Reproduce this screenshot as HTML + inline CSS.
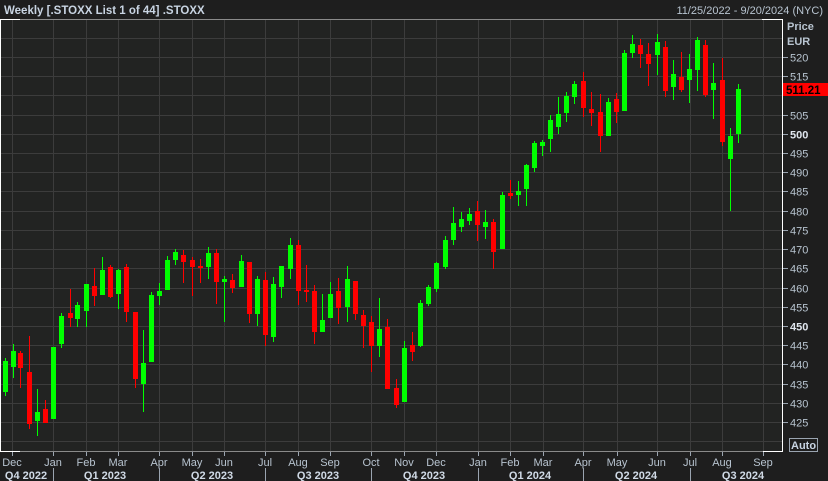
<!DOCTYPE html>
<html><head><meta charset="utf-8"><style>
html,body{margin:0;padding:0;background:#1e1e1e;}
body{width:828px;height:481px;overflow:hidden;position:relative;font-family:"Liberation Sans",sans-serif;}
svg{position:absolute;left:0;top:0;}
</style></head><body>
<svg id="s" width="828" height="481" xmlns="http://www.w3.org/2000/svg" font-family="Liberation Sans, sans-serif">
<rect x="0" y="0" width="828" height="481" fill="#1e1e1e"/>
<rect x="0" y="19" width="783" height="432" fill="#222322"/>
<g id="grid" stroke="#3c3c3c" stroke-width="1"></g>
<g id="c"></g>
<line x1="0" y1="19.5" x2="763" y2="19.5" stroke="#8a8a8a"/>
<line x1="0" y1="19.5" x2="20" y2="19.5" stroke="#ffffff"/>
<line x1="762" y1="19.5" x2="783" y2="19.5" stroke="#ffffff"/>
<line x1="782.5" y1="19" x2="782.5" y2="452" stroke="#ffffff"/>
<line x1="763" y1="451.5" x2="783" y2="451.5" stroke="#ffffff"/>
<line x1="0" y1="451.5" x2="763" y2="451.5" stroke="#8a8a8a"/>
<line x1="0.5" y1="19" x2="0.5" y2="451" stroke="#ffffff"/>
<line x1="0" y1="451.5" x2="20" y2="451.5" stroke="#ffffff"/>
<g id="ax" fill="#b8c4d0" font-size="11"></g>
<text x="4" y="14" fill="#c8d4e2" font-size="11.5" font-weight="bold">Weekly [.STOXX List 1 of 44] .STOXX</text>
<text x="823" y="14" fill="#b8c4d0" font-size="11" text-anchor="end">11/25/2022 - 9/20/2024 (NYC)</text>
<text x="787" y="30" fill="#b8c4d0" font-size="11" font-weight="bold">Price</text>
<text x="787" y="45" fill="#b8c4d0" font-size="11" font-weight="bold">EUR</text>
<rect x="783" y="83" width="45" height="13" fill="#ff0000"/>
<text x="786" y="94" fill="#000" font-size="11.5" font-weight="bold">511.21</text>
<rect x="789.5" y="438.5" width="28" height="13" fill="none" stroke="#9aa4b0"/>
<text x="791" y="449" fill="#c8d4e2" font-size="11" font-weight="bold">Auto</text>
</svg>
<script>
var NS="http://www.w3.org/2000/svg";
function el(p,t,a,txt){var e=document.createElementNS(NS,t);for(var k in a)e.setAttribute(k,a[k]);if(txt)e.textContent=txt;p.appendChild(e);return e;}
var g=document.getElementById('grid'),ax=document.getElementById('ax'),c=document.getElementById('c');
for(var p=525;p>=420;p-=5){var y=57+(520-p)*3.842;y=Math.round(y)+0.5;
 el(g,'line',{x1:0,y1:y,x2:783,y2:y});
 if(p<=520&&p>=425){el(ax,'line',{x1:783,y1:y,x2:788,y2:y,stroke:'#9aa4b0'});
  if(p!=510)el(ax,'text',{x:790,y:y+4,'font-weight':(p==500||p==450)?'bold':'normal',fill:(p==500||p==450)?'#e0e6ee':'#b8c4d0'},String(p));}
}
var months=[[12,'Dec'],[53,'Jan'],[86,'Feb'],[118,'Mar'],[159,'Apr'],[192,'May'],[224,'Jun'],[265,'Jul'],[298,'Aug'],[330,'Sep'],[371,'Oct'],[404,'Nov'],[436,'Dec'],[478,'Jan'],[510,'Feb'],[543,'Mar'],[583,'Apr'],[617,'May'],[657,'Jun'],[690,'Jul'],[722,'Aug'],[763,'Sep']];
months.forEach(function(m){var x=m[0]+0.5;el(g,'line',{x1:x,y1:20,x2:x,y2:451});
 el(ax,'line',{x1:x,y1:452,x2:x,y2:456,stroke:'#9aa4b0'});
 el(ax,'text',{x:m[0],y:466,'text-anchor':'middle'},m[1]);});
[53,159,265,371,478,583,690].forEach(function(x){el(ax,'line',{x1:x+0.5,y1:468,x2:x+0.5,y2:481,stroke:'#9aa4b0'});});
[[26,'Q4 2022'],[105,'Q1 2023'],[212,'Q2 2023'],[318,'Q3 2023'],[424,'Q4 2023'],[530,'Q1 2024'],[636,'Q2 2024'],[743,'Q3 2024']].forEach(function(q){
 el(ax,'text',{x:q[0],y:479,'text-anchor':'middle','font-weight':'bold',fill:'#d0dae6'},q[1]);});
var d=[
[4.5,358,361,392,396,'g'],[12.5,344,351,367,378,'g'],[20,351,353,368,388,'r'],[28.5,336,372,424,429,'r'],[37,389,412,421,436,'g'],[45,400,409,423,423,'r'],[53,347,347,419,419,'g'],[61,313,316,344,348,'g'],[69.5,289,313,318,327,'r'],[77,302,305,319,327,'g'],
[86,284,284,311,327,'g'],[94,268,286,296,306,'r'],[102,257,270,295,295,'g'],[110,265,267,297,298,'r'],[118,269,270,294,309,'g'],[126,264,267,312,322,'r'],[135,312,312,379,388,'r'],[143,330,363,384,412,'g'],[151,292,295,362,362,'g'],[159,283,291,296,305,'g'],
[167,256,260,290,290,'g'],[175,249,252,260,265,'g'],[183,250,255,262,283,'r'],[192,257,260,267,296,'r'],[200,259,266,267,283,'r'],[208,247,253,267,279,'g'],[216,249,253,282,304,'r'],[224,276,279,282,322,'g'],[232,274,280,288,293,'r'],[241,255,261,287,287,'g'],
[249,262,262,314,323,'r'],[257,276,279,314,326,'g'],[265,272,280,335,346,'r'],[273,277,284,337,342,'g'],[281,266,266,287,298,'g'],[290,238,245,269,279,'g'],[298,240,245,291,305,'r'],[306,265,290,291,302,'r'],[314,285,291,332,344,'r'],[322,294,320,332,332,'g'],
[330,282,294,318,318,'g'],[338,278,291,308,324,'r'],[347,266,279,307,322,'g'],[355,281,281,314,320,'r'],[363,310,315,326,348,'r'],[371,316,322,346,372,'r'],[379,298,329,346,357,'g'],[387,319,327,389,389,'r'],[396,379,388,405,408,'r'],[404,341,348,402,402,'g'],
[412,332,345,352,361,'r'],[420,300,303,346,347,'g'],[428,285,287,304,306,'g'],[436,262,263,289,292,'g'],[445,236,240,267,269,'g'],[453,207,223,240,245,'g'],[461,212,219,227,232,'g'],[469,208,214,221,225,'g'],[477,201,211,225,241,'r'],[485,210,222,227,239,'g'],
[493,219,222,252,269,'r'],[502,192,195,249,249,'g'],[510,180,193,196,199,'r'],[518,181,191,195,206,'g'],[526,164,165,189,206,'g'],[534,141,143,168,172,'g'],[542,140,142,146,156,'g'],[550,115,120,139,152,'g'],[558,97,114,127,134,'g'],[566,92,96,113,122,'g'],
[574,81,84,97,104,'g'],[583,72,81,108,117,'r'],[591,92,109,113,126,'r'],[600,94,112,136,152,'r'],[608,98,102,136,136,'g'],[616,93,99,112,123,'r'],[624,50,53,111,111,'g'],[632,35,44,53,58,'g'],[640,39,45,54,68,'r'],[648,43,54,64,86,'r'],
[657,34,42,55,75,'g'],[665,41,47,91,97,'r'],[673,60,74,87,100,'g'],[681,52,77,90,92,'r'],[689,54,69,80,103,'g'],[697,37,40,70,91,'g'],[705,40,45,95,97,'r'],[713,63,83,90,119,'g'],[722,58,80,142,146,'r'],[730,128,136,159,211,'g'],[738,84,89,134,143,'g']];
d.forEach(function(k){var col=k[5]=='g'?'#00ff00':'#ff0000';var x=Math.round(k[0]);
 el(c,'rect',{x:x,y:k[1],width:1,height:Math.max(1,k[4]-k[1]),fill:col});
 el(c,'rect',{x:x-2,y:k[2],width:5,height:Math.max(2,k[3]-k[2]),fill:col});});
</script>
</body></html>
